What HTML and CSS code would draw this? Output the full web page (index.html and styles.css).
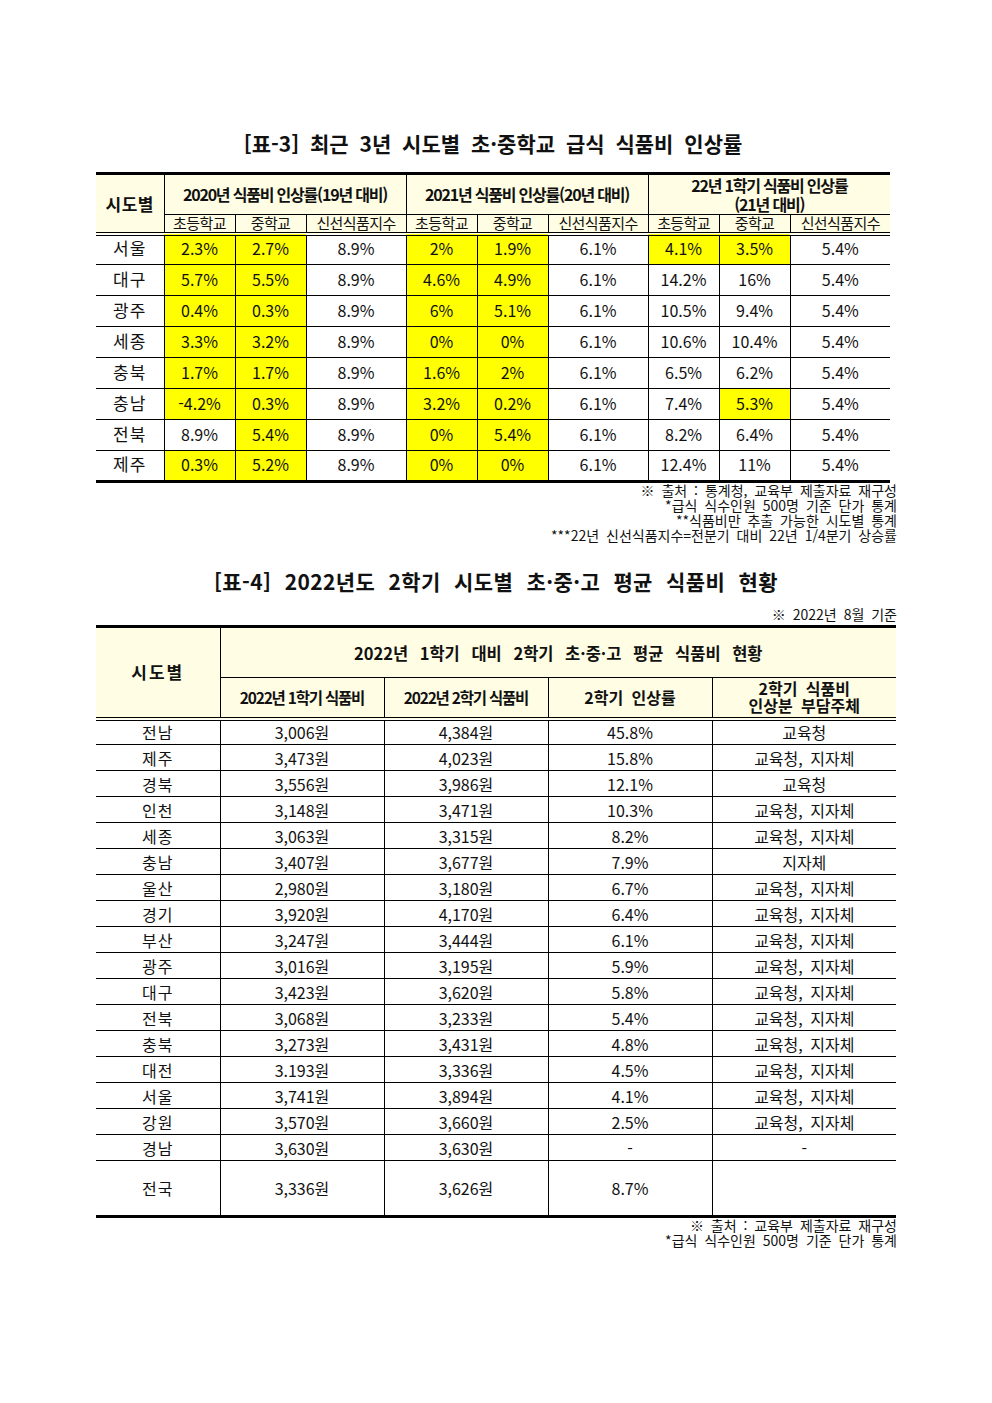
FILE: index.html
```html
<!DOCTYPE html>
<html lang="ko">
<head>
<meta charset="utf-8">
<title>시도별 급식 식품비</title>
<link rel="stylesheet" href="styles.css">
</head>
<body>
<div class="page">
  <h2 class="title t1">[표-3] 최근 3년 시도별 초·중학교 급식 식품비 인상률</h2>
  <table class="tbl tbl1">
    <colgroup>
      <col style="width:68px"><col style="width:71px"><col style="width:71px"><col style="width:100px">
      <col style="width:71px"><col style="width:71px"><col style="width:100px">
      <col style="width:71px"><col style="width:71px"><col style="width:100px">
    </colgroup>
    <thead>
      <tr class="h1">
        <th rowspan="2" class="region-h">시도별</th>
        <th colspan="3" class="grp">2020년 식품비 인상률(19년 대비)</th>
        <th colspan="3" class="grp">2021년 식품비 인상률(20년 대비)</th>
        <th colspan="3" class="grp">22년 1학기 식품비 인상률<br>(21년 대비)</th>
      </tr>
      <tr class="h2">
        <th>초등학교</th><th>중학교</th><th>신선식품지수</th>
        <th>초등학교</th><th>중학교</th><th>신선식품지수</th>
        <th>초등학교</th><th>중학교</th><th>신선식품지수</th>
      </tr>
    </thead>
    <tbody>
      <tr><td>서울</td><td class="y">2.3%</td><td class="y">2.7%</td><td>8.9%</td><td class="y">2%</td><td class="y">1.9%</td><td>6.1%</td><td class="y">4.1%</td><td class="y">3.5%</td><td>5.4%</td></tr>
      <tr><td>대구</td><td class="y">5.7%</td><td class="y">5.5%</td><td>8.9%</td><td class="y">4.6%</td><td class="y">4.9%</td><td>6.1%</td><td>14.2%</td><td>16%</td><td>5.4%</td></tr>
      <tr><td>광주</td><td class="y">0.4%</td><td class="y">0.3%</td><td>8.9%</td><td class="y">6%</td><td class="y">5.1%</td><td>6.1%</td><td>10.5%</td><td>9.4%</td><td>5.4%</td></tr>
      <tr><td>세종</td><td class="y">3.3%</td><td class="y">3.2%</td><td>8.9%</td><td class="y">0%</td><td class="y">0%</td><td>6.1%</td><td>10.6%</td><td>10.4%</td><td>5.4%</td></tr>
      <tr><td>충북</td><td class="y">1.7%</td><td class="y">1.7%</td><td>8.9%</td><td class="y">1.6%</td><td class="y">2%</td><td>6.1%</td><td>6.5%</td><td>6.2%</td><td>5.4%</td></tr>
      <tr><td>충남</td><td class="y">-4.2%</td><td class="y">0.3%</td><td>8.9%</td><td class="y">3.2%</td><td class="y">0.2%</td><td>6.1%</td><td>7.4%</td><td class="y">5.3%</td><td>5.4%</td></tr>
      <tr><td>전북</td><td>8.9%</td><td class="y">5.4%</td><td>8.9%</td><td class="y">0%</td><td class="y">5.4%</td><td>6.1%</td><td>8.2%</td><td>6.4%</td><td>5.4%</td></tr>
      <tr><td>제주</td><td class="y">0.3%</td><td class="y">5.2%</td><td>8.9%</td><td class="y">0%</td><td class="y">0%</td><td>6.1%</td><td>12.4%</td><td>11%</td><td>5.4%</td></tr>
    </tbody>
  </table>
  <div class="notes notes1">
    <p>※ 출처 : 통계청, 교육부 제출자료 재구성</p>
    <p>*급식 식수인원 500명 기준 단가 통계</p>
    <p>**식품비만 추출 가능한 시도별 통계</p>
    <p>***22년 신선식품지수=전분기 대비 22년 1/4분기 상승률</p>
  </div>

  <h2 class="title t2">[표-4] 2022년도 2학기 시도별 초·중·고 평균 식품비 현황</h2>
  <div class="basis">※ 2022년 8월 기준</div>
  <table class="tbl tbl2">
    <colgroup>
      <col style="width:124px"><col style="width:164px"><col style="width:164px"><col style="width:164px"><col style="width:184px">
    </colgroup>
    <thead>
      <tr class="h1">
        <th rowspan="2" class="region-h">시도별</th>
        <th colspan="4" class="grp">2022년 1학기 대비 2학기 초·중·고 평균 식품비 현황</th>
      </tr>
      <tr class="h2">
        <th class="tight">2022년 1학기 식품비</th>
        <th class="tight">2022년 2학기 식품비</th>
        <th>2학기 인상률</th>
        <th class="two">2학기 식품비<br>인상분 부담주체</th>
      </tr>
    </thead>
    <tbody>
      <tr><td>전남</td><td>3,006원</td><td>4,384원</td><td>45.8%</td><td>교육청</td></tr>
      <tr><td>제주</td><td>3,473원</td><td>4,023원</td><td>15.8%</td><td>교육청, 지자체</td></tr>
      <tr><td>경북</td><td>3,556원</td><td>3,986원</td><td>12.1%</td><td>교육청</td></tr>
      <tr><td>인천</td><td>3,148원</td><td>3,471원</td><td>10.3%</td><td>교육청, 지자체</td></tr>
      <tr><td>세종</td><td>3,063원</td><td>3,315원</td><td>8.2%</td><td>교육청, 지자체</td></tr>
      <tr><td>충남</td><td>3,407원</td><td>3,677원</td><td>7.9%</td><td>지자체</td></tr>
      <tr><td>울산</td><td>2,980원</td><td>3,180원</td><td>6.7%</td><td>교육청, 지자체</td></tr>
      <tr><td>경기</td><td>3,920원</td><td>4,170원</td><td>6.4%</td><td>교육청, 지자체</td></tr>
      <tr><td>부산</td><td>3,247원</td><td>3,444원</td><td>6.1%</td><td>교육청, 지자체</td></tr>
      <tr><td>광주</td><td>3,016원</td><td>3,195원</td><td>5.9%</td><td>교육청, 지자체</td></tr>
      <tr><td>대구</td><td>3,423원</td><td>3,620원</td><td>5.8%</td><td>교육청, 지자체</td></tr>
      <tr><td>전북</td><td>3,068원</td><td>3,233원</td><td>5.4%</td><td>교육청, 지자체</td></tr>
      <tr><td>충북</td><td>3,273원</td><td>3,431원</td><td>4.8%</td><td>교육청, 지자체</td></tr>
      <tr><td>대전</td><td>3.193원</td><td>3,336원</td><td>4.5%</td><td>교육청, 지자체</td></tr>
      <tr><td>서울</td><td>3,741원</td><td>3,894원</td><td>4.1%</td><td>교육청, 지자체</td></tr>
      <tr><td>강원</td><td>3,570원</td><td>3,660원</td><td>2.5%</td><td>교육청, 지자체</td></tr>
      <tr><td>경남</td><td>3,630원</td><td>3,630원</td><td>-</td><td>-</td></tr>
      <tr class="total"><td>전국</td><td>3,336원</td><td>3,626원</td><td>8.7%</td><td></td></tr>
    </tbody>
  </table>
  <div class="notes notes2">
    <p>※ 출처 : 교육부 제출자료 재구성</p>
    <p>*급식 식수인원 500명 기준 단가 통계</p>
  </div>
</div>
</body>
</html>
```

FILE: styles.css
```css
* { box-sizing: border-box; }
html, body { margin: 0; padding: 0; background: #fff; }
body {
  font-family: "Noto Sans CJK KR", "Noto Sans", sans-serif;
  color: #111;
}
.page {
  width: 992px;
  padding: 129px 0 0 96px;
}
.title {
  margin: 0;
  font-size: 21px;
  line-height: 28px;
  font-weight: 700;
  text-align: center;
  word-spacing: 5px;
  color: #111;
}
.t1 { width: 794px; margin-bottom: 15px; }
.t2 { width: 800px; margin-top: 24px; letter-spacing: 0.4px; word-spacing: 7px; }

.tbl {
  border-collapse: collapse;
  table-layout: fixed;
}
.tbl1 { width: 794px; }
.tbl2 { width: 800px; }

.tbl th, .tbl td {
  border: 1px solid #000;
  padding: 0;
  text-align: center;
  vertical-align: middle;
}
.tbl tr > :first-child { border-left: none; }
.tbl tr > :last-child { border-right: none; }
.tbl .h1 th { border-top: 3px solid #000; }
.tbl .h2 th { border-bottom: 4px double #000; }
.tbl .region-h { border-bottom: 4px double #000; border-left: none; }
.tbl tbody tr:last-child td { border-bottom: 3px solid #000; }

.tbl th {
  background: #fffde3;
  font-weight: 700;
}

/* table 1 */
.tbl1 .h1 th { height: 41px; font-size: 16px; line-height: 19px; letter-spacing: -1.2px; }
.tbl1 .h1 .region-h { font-size: 17px; letter-spacing: 0.5px; }
.tbl1 .h2 th { height: 19px; font-size: 15px; line-height: 16px; font-weight: 400; letter-spacing: -0.6px; }
.tbl1 td { height: 31px; font-size: 16px; line-height: 20px; padding-bottom: 3px; }
.tbl1 td.y { background: #ffff00; }
.tbl1 tbody td:first-child { font-size: 17px; letter-spacing: 1px; }

/* table 2 */
.tbl2 .h1 th { height: 51px; font-size: 16.5px; line-height: 20px; word-spacing: 7px; }
.tbl2 .h1 .region-h { font-size: 17px; letter-spacing: 2px; }
.tbl2 .h2 th { height: 41px; font-size: 16px; line-height: 18px; word-spacing: 4px; }
.tbl2 .h2 th.tight { font-size: 15.5px; letter-spacing: -1.2px; word-spacing: 0; }
.tbl2 .h2 th.two { line-height: 17px; }
.tbl2 td { height: 26px; font-size: 16px; line-height: 20px; }
.tbl2 tbody td:first-child { letter-spacing: 1px; }
.tbl2 td:last-child { word-spacing: 3px; }
.tbl2 .total td { height: 56px; }
.tbl2 .total td:nth-child(4) { border-right: 1px solid #000; }

.notes, .basis {
  text-align: right;
  font-size: 14px;
  line-height: 15px;
  word-spacing: 3px;
}
.notes p { margin: 0; }
.notes1 { width: 801px; padding-top: 0; }
.notes2 { width: 801px; padding-top: 0; }
.basis { width: 801px; margin-top: 12px; margin-bottom: 3px; }
```
